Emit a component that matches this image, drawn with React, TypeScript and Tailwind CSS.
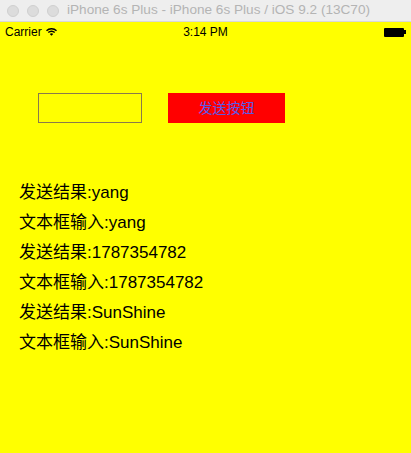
const font = {
  fontFamily: '"Liberation Sans", "Noto Sans CJK SC", sans-serif',
};

const lines = [
  "发送结果:yang",
  "文本框输入:yang",
  "发送结果:1787354782",
  "文本框输入:1787354782",
  "发送结果:SunShine",
  "文本框输入:SunShine",
];

function WifiIcon() {
  return (
    <svg width="11" height="8" viewBox="0 0 11 8" className="ml-[4px]">
      <path d="M0.5 2.8 A7 7 0 0 1 10.5 2.8" stroke="#000" strokeWidth="1.4" fill="none" />
      <path d="M2.3 4.6 A4.4 4.4 0 0 1 8.7 4.6" stroke="#000" strokeWidth="1.4" fill="none" />
      <path d="M5.5 7.8 L3.8 6.1 A2.4 2.4 0 0 1 7.2 6.1 Z" fill="#000" />
    </svg>
  );
}

function Battery() {
  return (
    <div className="flex items-center">
      <div className="h-[9px] w-[20px] rounded-[1px] bg-black" />
      <div className="h-[4px] w-[2px] bg-black" />
    </div>
  );
}

export default function App() {
  return (
    <div className="h-[453px] w-[411px] overflow-hidden bg-[#ffff00]" style={font}>
      <div className="flex h-[22px] items-center border-b border-[#d8d8d8] bg-[#eeeeee]">
        <div className="flex gap-[8px] pl-[7px]">
          <span className="size-[12px] rounded-full border border-[#cfcfcf] bg-[#dcdcdc]" />
          <span className="size-[12px] rounded-full border border-[#cfcfcf] bg-[#dcdcdc]" />
          <span className="size-[12px] rounded-full border border-[#cfcfcf] bg-[#dcdcdc]" />
        </div>
        <span className="ml-[8px] text-[13.6px] text-[#b4b4b4]">
          iPhone 6s Plus - iPhone 6s Plus / iOS 9.2 (13C70)
        </span>
      </div>

      <div className="relative flex h-[20px] items-center px-[5px] text-[12px] text-black">
        <span>Carrier</span>
        <WifiIcon />
        <span className="absolute left-1/2 -translate-x-1/2 font-medium">3:14 PM</span>
        <div className="ml-auto">
          <Battery />
        </div>
      </div>

      <div className="mt-[51px] flex items-center pl-[38px]">
        <div className="h-[30px] w-[104px] border border-[#8a7a4a] bg-[#ffff00]" />
        <button
          type="button"
          className="ml-[26px] flex h-[30px] w-[117px] items-center justify-center bg-[#ff0000] text-[14px] text-[#5a5ae6]"
        >
          发送按钮
        </button>
      </div>

      <div className="mt-[55px] pl-[19px] text-[17px] leading-[30px] text-black">
        {lines.map((line, i) => (
          <div key={i}>{line}</div>
        ))}
      </div>
    </div>
  );
}
